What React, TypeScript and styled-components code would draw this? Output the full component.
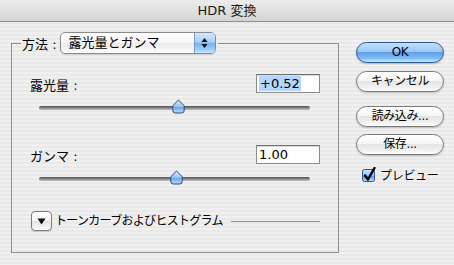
import styled, { createGlobalStyle } from "styled-components";

const FONT = `"DejaVu Sans", "Noto Sans CJK JP", sans-serif`;

const GlobalStyle = createGlobalStyle`
  html, body { margin: 0; padding: 0; }
  body { background: #ececec; font-family: ${FONT}; }
`;

const Window = styled.div`
  width: 454px;
  height: 265px;
  overflow: hidden;
  display: flex;
  flex-direction: column;
  background: repeating-linear-gradient(to bottom, #f0f0f0 0 2px, #e9e9e9 2px 4px);
  font-family: ${FONT};
  color: #000;
`;

const TitleBar = styled.div`
  flex: 0 0 21px;
  border-bottom: 1px solid #8f8f8f;
  background: linear-gradient(#ececec, #d4d4d4);
  display: flex;
  align-items: center;
  justify-content: center;
  font-size: 13px;
  line-height: 21px;
  color: #1a1a1a;
`;

const Body = styled.div`
  display: flex;
  align-items: flex-start;
`;

const Group = styled.fieldset`
  margin: 10px 0 0 11px;
  padding: 0;
  width: 328px;
  box-sizing: border-box;
  border: 1px solid #8e8e8e;
  min-width: 0;
`;

const Legend = styled.legend`
  margin-left: 9px;
  padding: 0 2px 0 1px;
  height: 22px;
  display: flex;
  align-items: center;
  gap: 3px;
  font-size: 13px;
`;

const Popup = styled.div`
  width: 156px;
  height: 22px;
  box-sizing: border-box;
  border: 1px solid #8a8a8a;
  border-radius: 5px;
  background: linear-gradient(#ffffff 0%, #f7f7f7 50%, #ececec 52%, #fbfbfb 100%);
  display: flex;
  overflow: hidden;
  box-shadow: 0 1px 1px rgba(0, 0, 0, 0.12);
`;

const PopupLabel = styled.span`
  flex: 1;
  padding-left: 8px;
  line-height: 20px;
  font-size: 13px;
`;

const PopupArrows = styled.span`
  width: 20px;
  border-left: 1px solid #7b98c8;
  background: linear-gradient(#d3e7fc 0%, #a9d0f7 45%, #74b2f0 52%, #9fd0fa 85%, #cfeaff 100%);
  display: flex;
  align-items: center;
  justify-content: center;
`;

const Inner = styled.div`
  padding: 20px 18px 21px 18px;
  display: flex;
  flex-direction: column;
`;

const FieldRow = styled.div<{ $top?: number }>`
  display: flex;
  align-items: center;
  justify-content: space-between;
  height: 19px;
  margin-top: ${(p) => p.$top ?? 0}px;
`;

const Label = styled.span`
  font-size: 13px;
  line-height: 19px;
  padding-top: 3px;
`;

const NumberBox = styled.div`
  width: 64px;
  height: 19px;
  box-sizing: border-box;
  border: 1px solid #8c8c8c;
  border-top-color: #6e6e6e;
  background: #fff;
  box-shadow: inset 0 1px 1px rgba(0, 0, 0, 0.15);
  padding-left: 2px;
  display: flex;
  align-items: center;
  font-size: 13px;
  line-height: 15px;
`;

const Selected = styled.span`
  background: #b5d5ff;
  padding: 0 1px;
`;

const Slider = styled.div`
  position: relative;
  height: 14px;
  margin: 6px 10px 0 9px;
`;

const Track = styled.div`
  position: absolute;
  left: 0;
  right: 0;
  top: 7px;
  height: 4px;
  border-radius: 2px;
  background: linear-gradient(#4e4e4e, #8c8c8c 55%, #c4c4c4);
`;

const Thumb = styled.svg`
  position: absolute;
  top: 0;
  width: 13px;
  height: 15px;
  margin-left: -6px;
`;

const DisclosureRow = styled.div`
  display: flex;
  align-items: center;
  margin-top: 27px;
  margin-left: 1px;
  height: 20px;
`;

const DisclosureButton = styled.div`
  width: 21px;
  height: 20px;
  box-sizing: border-box;
  border: 1px solid #7c7c7c;
  border-radius: 4px;
  background: linear-gradient(#ffffff, #f2f2f2 50%, #e4e4e4 52%, #fafafa);
  box-shadow: 0 1px 1px rgba(0, 0, 0, 0.15);
  display: flex;
  align-items: center;
  justify-content: center;
`;

const DisclosureText = styled.span`
  margin-left: 3px;
  font-size: 12px;
  letter-spacing: -0.7px;
  line-height: 20px;
`;

const Rule = styled.div`
  flex: 1;
  height: 1px;
  margin-left: 8px;
  background: #8e8e8e;
`;

const Side = styled.div`
  width: 88px;
  margin-left: 17px;
  padding-top: 20px;
  display: flex;
  flex-direction: column;
`;

const Button = styled.div<{ $primary?: boolean; $top?: number }>`
  height: 21px;
  box-sizing: border-box;
  margin-top: ${(p) => p.$top ?? 0}px;
  border-radius: 11px;
  border: 1px solid ${(p) => (p.$primary ? "#2f5595" : "#7a7a7a")};
  background: ${(p) =>
    p.$primary
      ? "linear-gradient(#c6e0fb 0%, #9ac6f4 45%, #5e9fe8 50%, #7fbdf5 80%, #c4ebff 100%)"
      : "linear-gradient(#ffffff 0%, #f6f6f6 45%, #e5e5e5 50%, #f0f0f0 80%, #ffffff 100%)"};
  box-shadow: 0 1px 2px rgba(0, 0, 0, 0.22);
  display: flex;
  align-items: center;
  justify-content: center;
  font-size: 12px;
  letter-spacing: -0.4px;
  line-height: 19px;
`;

const CheckRow = styled.div`
  display: flex;
  align-items: center;
  margin-top: 11px;
  margin-left: 6px;
  gap: 1px;
`;

const CheckText = styled.span`
  font-size: 12px;
  letter-spacing: -0.3px;
  line-height: 16px;
  padding-top: 2px;
`;

function SliderControl({ value }: { value: number }) {
  return (
    <Slider>
      <Track />
      <Thumb viewBox="0 0 13 15" style={{ left: `${value * 100}%` }}>
        <defs>
          <linearGradient id={`tg${value}`} x1="0" y1="0" x2="0" y2="1">
            <stop offset="0" stopColor="#dfeafa" />
            <stop offset="0.5" stopColor="#9cc2ef" />
            <stop offset="0.55" stopColor="#6aa4ea" />
            <stop offset="1" stopColor="#b9defc" />
          </linearGradient>
        </defs>
        <path
          d="M6.5 1 L11.8 6.3 Q12.2 6.8 12.2 7.5 V11.5 Q12.2 14 9.7 14 H3.3 Q0.8 14 0.8 11.5 V7.5 Q0.8 6.8 1.2 6.3 Z"
          fill={`url(#tg${value})`}
          stroke="#2b4784"
          strokeWidth="1"
        />
      </Thumb>
    </Slider>
  );
}

export default function App() {
  return (
    <>
      <GlobalStyle />
      <Window>
        <TitleBar>HDR 変換</TitleBar>
        <Body>
          <Group>
            <Legend>
              <span>方法 :</span>
              <Popup>
                <PopupLabel>露光量とガンマ</PopupLabel>
                <PopupArrows>
                  <svg width="7" height="12" viewBox="0 0 7 12">
                    <path d="M3.5 1 L6.5 5 H0.5 Z" fill="#111" />
                    <path d="M3.5 11 L6.5 7 H0.5 Z" fill="#111" />
                  </svg>
                </PopupArrows>
              </Popup>
            </Legend>
            <Inner>
              <FieldRow>
                <Label>露光量 :</Label>
                <NumberBox>
                  <Selected>+0.52</Selected>
                </NumberBox>
              </FieldRow>
              <SliderControl value={0.513} />
              <FieldRow $top={32}>
                <Label>ガンマ :</Label>
                <NumberBox>1.00</NumberBox>
              </FieldRow>
              <SliderControl value={0.505} />
              <DisclosureRow>
                <DisclosureButton>
                  <svg width="9" height="7" viewBox="0 0 9 7">
                    <path d="M0.5 0.5 H8.5 L4.5 6.5 Z" fill="#111" />
                  </svg>
                </DisclosureButton>
                <DisclosureText>トーンカーブおよびヒストグラム</DisclosureText>
                <Rule />
              </DisclosureRow>
            </Inner>
          </Group>
          <Side>
            <Button $primary>OK</Button>
            <Button $top={8}>キャンセル</Button>
            <Button $top={14}>読み込み...</Button>
            <Button $top={7}>保存...</Button>
            <CheckRow>
              <svg width="17" height="16" viewBox="0 0 17 16">
                <defs>
                  <linearGradient id="cbg" x1="0" y1="0" x2="0" y2="1">
                    <stop offset="0" stopColor="#cfe5fb" />
                    <stop offset="0.5" stopColor="#8dc0f3" />
                    <stop offset="0.55" stopColor="#5b9deb" />
                    <stop offset="1" stopColor="#b5e2fe" />
                  </linearGradient>
                </defs>
                <rect x="0.5" y="2.5" width="12" height="12" rx="2" fill="url(#cbg)" stroke="#34558f" />
                <path
                  d="M3 8.5 L6 12.5 L12.5 1"
                  fill="none"
                  stroke="#000"
                  strokeWidth="2.4"
                  strokeLinecap="round"
                  strokeLinejoin="round"
                />
              </svg>
              <CheckText>プレビュー</CheckText>
            </CheckRow>
          </Side>
        </Body>
      </Window>
    </>
  );
}
